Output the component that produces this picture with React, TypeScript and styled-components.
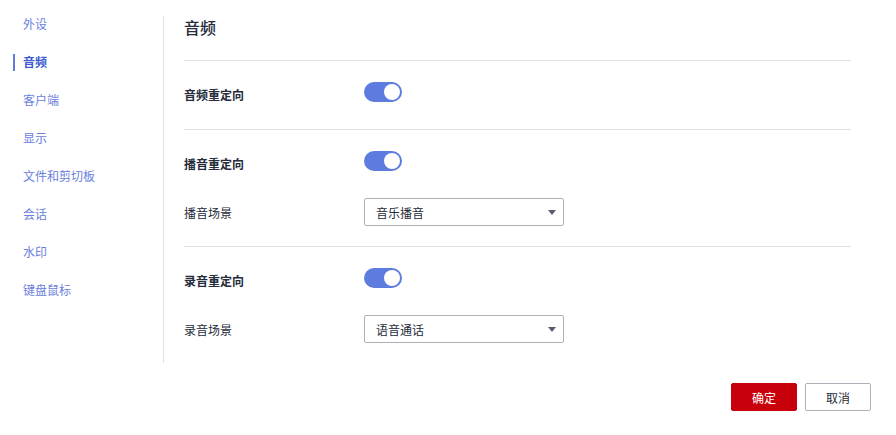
import React, { useState } from "react";
import styled, { createGlobalStyle } from "styled-components";

const Global = createGlobalStyle`
  html, body { margin: 0; padding: 0; background: #fff; }
  body { font-family: "Noto Sans CJK SC", "Noto Sans", sans-serif; color: #252b3a; }
  * { box-sizing: border-box; }
`;

const Page = styled.div`
  width: 896px;
  height: 435px;
  display: flex;
  flex-direction: column;
`;

const Top = styled.div`
  display: flex;
  align-items: flex-start;
`;

const Sidebar = styled.nav`
  width: 163px;
  padding-top: 5px;
  display: flex;
  flex-direction: column;
`;

const NavItem = styled.div<{ $active?: boolean }>`
  position: relative;
  height: 38px;
  line-height: 38px;
  padding-left: 23px;
  font-size: 12px;
  color: ${(p) => (p.$active ? "#3d5bd0" : "#6a80dc")};
  font-weight: ${(p) => (p.$active ? 600 : 400)};
  cursor: pointer;
  &::before {
    content: "";
    display: ${(p) => (p.$active ? "block" : "none")};
    position: absolute;
    left: 13px;
    top: 11px;
    width: 2px;
    height: 17px;
    background: #5e7ce0;
  }
`;

const VDivider = styled.div`
  width: 1px;
  height: 347px;
  margin-top: 16px;
  background: #dfe1e6;
`;

const Main = styled.main`
  margin-left: 20px;
  width: 667px;
`;

const Title = styled.div`
  height: 61px;
  padding-top: 16px;
  font-size: 16px;
  line-height: 22px;
  font-weight: 500;
  color: #252b3a;
  border-bottom: 1px solid #dfe1e6;
`;

const Section = styled.section<{ $last?: boolean; $padBottom?: number }>`
  display: flex;
  flex-direction: column;
  gap: 22px;
  padding: 18px 0 ${(p) => p.$padBottom ?? 20}px;
  border-bottom: ${(p) => (p.$last ? "none" : "1px solid #dfe1e6")};
`;

const Row = styled.div`
  display: flex;
  align-items: center;
  height: 28px;
`;

const Label = styled.div<{ $bold?: boolean }>`
  width: 180px;
  font-size: 12px;
  font-weight: ${(p) => (p.$bold ? 600 : 400)};
  color: #252b3a;
  padding-top: ${(p) => (p.$bold ? "3px" : "0")};
`;

const Track = styled.button<{ $on: boolean }>`
  position: relative;
  width: 38px;
  height: 20px;
  border: none;
  padding: 0;
  border-radius: 10px;
  background: ${(p) => (p.$on ? "#5e7ce0" : "#adb0b8")};
  cursor: pointer;
  margin-top: -2px;
`;

const Knob = styled.span<{ $on: boolean }>`
  position: absolute;
  top: 2px;
  left: ${(p) => (p.$on ? "20px" : "2px")};
  width: 16px;
  height: 16px;
  border-radius: 50%;
  background: #fff;
`;

const SelectBox = styled.div`
  width: 200px;
  height: 28px;
  border: 1px solid #adb0b8;
  border-radius: 2px;
  display: flex;
  align-items: center;
  justify-content: space-between;
  padding: 0 7px 0 11px;
  font-size: 12px;
  color: #252b3a;
  cursor: pointer;
`;

const Caret = styled.span`
  width: 0;
  height: 0;
  border-left: 4px solid transparent;
  border-right: 4px solid transparent;
  border-top: 5px solid #575d6c;
`;

const Footer = styled.div`
  display: flex;
  justify-content: flex-end;
  gap: 8px;
  padding: 20px 25px 0 0;
`;

const Btn = styled.button<{ $primary?: boolean }>`
  width: 66px;
  height: 28px;
  border-radius: 2px;
  font-family: inherit;
  font-size: 12px;
  cursor: pointer;
  border: 1px solid ${(p) => (p.$primary ? "#c7000b" : "#adb0b8")};
  background: ${(p) => (p.$primary ? "#c7000b" : "#fff")};
  color: ${(p) => (p.$primary ? "#fff" : "#252b3a")};
`;

const Toggle = ({ initial = true }: { initial?: boolean }) => {
  const [on, setOn] = useState(initial);
  return (
    <Track $on={on} onClick={() => setOn(!on)}>
      <Knob $on={on} />
    </Track>
  );
};

const Select = ({ value }: { value: string }) => (
  <SelectBox>
    <span>{value}</span>
    <Caret />
  </SelectBox>
);

const navItems = ["外设", "音频", "客户端", "显示", "文件和剪切板", "会话", "水印", "键盘鼠标"];

export default function App() {
  return (
    <Page>
      <Global />
      <Top>
        <Sidebar>
          {navItems.map((n) => (
            <NavItem key={n} $active={n === "音频"}>
              {n}
            </NavItem>
          ))}
        </Sidebar>
        <VDivider />
        <Main>
          <Title>音频</Title>
          <Section $padBottom={22}>
            <Row>
              <Label $bold>音频重定向</Label>
              <Toggle />
            </Row>
          </Section>
          <Section $padBottom={20}>
            <Row>
              <Label $bold>播音重定向</Label>
              <Toggle />
            </Row>
            <Row>
              <Label>播音场景</Label>
              <Select value="音乐播音" />
            </Row>
          </Section>
          <Section $last>
            <Row>
              <Label $bold>录音重定向</Label>
              <Toggle />
            </Row>
            <Row>
              <Label>录音场景</Label>
              <Select value="语音通话" />
            </Row>
          </Section>
        </Main>
      </Top>
      <Footer>
        <Btn $primary>确定</Btn>
        <Btn>取消</Btn>
      </Footer>
    </Page>
  );
}
